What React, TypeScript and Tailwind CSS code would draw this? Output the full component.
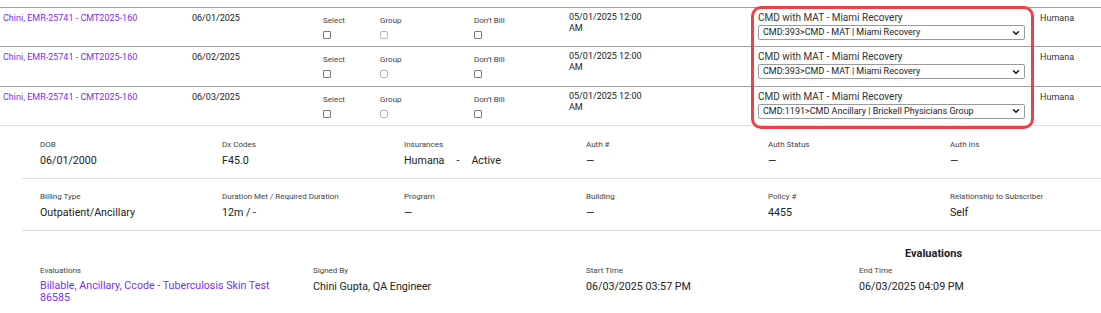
import { ChevronDown } from 'lucide-react'
import type { ReactNode } from 'react'

const rows = [
  { date: '06/01/2025', option: 'CMD:393>CMD - MAT | Miami Recovery' },
  { date: '06/02/2025', option: 'CMD:393>CMD - MAT | Miami Recovery' },
  { date: '06/03/2025', option: 'CMD:1191>CMD Ancillary | Brickell Physicians Group' },
]

const insurance = (
  <>
    Humana<span className="mx-[12px]">-</span>Active
  </>
)

const details: { label: string; value: ReactNode }[][] = [
  [
    { label: 'DOB', value: '06/01/2000' },
    { label: 'Dx Codes', value: 'F45.0' },
    { label: 'Insurances', value: insurance },
    { label: 'Auth #', value: '—' },
    { label: 'Auth Status', value: '—' },
    { label: 'Auth Ins', value: '—' },
  ],
  [
    { label: 'Billing Type', value: 'Outpatient/Ancillary' },
    { label: 'Duration Met / Required Duration', value: '12m / -' },
    { label: 'Program', value: '—' },
    { label: 'Building', value: '—' },
    { label: 'Policy #', value: '4455' },
    { label: 'Relationship to Subscriber', value: 'Self' },
  ],
]

function Box({ soft }: { soft?: boolean }) {
  return (
    <span
      className={
        soft
          ? 'block h-[8px] w-[8px] rounded-[2px] border border-[#b5b5b5]'
          : 'block h-[8px] w-[8px] rounded-[1px] border border-[#7a7a7a]'
      }
    />
  )
}

function CheckCell({ label, soft }: { label: string; soft?: boolean }) {
  return (
    <div className="flex flex-col gap-[5px] pt-[8px]">
      <span className="text-[8px] leading-[10px] text-[#444]">{label}</span>
      <Box soft={soft} />
    </div>
  )
}

function Field({ label, value }: { label: string; value: ReactNode }) {
  return (
    <div className="flex flex-col">
      <span className="text-[8px] leading-[10px] text-[#444]">{label}</span>
      <span className="mt-[4px] whitespace-pre text-[10.7px] leading-[13px] text-[#222]">{value}</span>
    </div>
  )
}

export default function App() {
  return (
    <div className="relative h-[313px] w-[1101px] overflow-hidden bg-white font-['Roboto',sans-serif]">
      <div className="mt-[7px] border-t border-[#a0a0a0]">
        {rows.map((r, i) => (
          <div
            key={r.date}
            className={`flex h-[39.4px] border-b ${i === rows.length - 1 ? 'border-[#dedede]' : 'border-[#a0a0a0]'}`}
          >
            <div className="w-[192px] pl-[3px] pt-[4px] text-[9px] leading-[12px] text-[#7b2ff0]">
              Chini, EMR-25741 - CMT2025-160
            </div>
            <div className="w-[131px] pt-[4px] text-[9px] leading-[12px] text-[#222]">{r.date}</div>
            <div className="w-[57px]">
              <CheckCell label="Select" />
            </div>
            <div className="w-[94px]">
              <CheckCell label="Group" soft />
            </div>
            <div className="w-[95px]">
              <CheckCell label="Don't Bill" />
            </div>
            <div className="w-[189px] pt-[4px] text-[9px] leading-[11px] text-[#222]">
              05/01/2025 12:00
              <br />
              AM
            </div>
            <div className="w-[282px] pt-[4px]">
              <div className="text-[10px] leading-[12px] text-[#333]">CMD with MAT - Miami Recovery</div>
              <div className="mt-[1px] flex h-[15px] w-[267px] items-center justify-between rounded-[2px] border border-[#9a9a9a] pl-[4px] pr-[3px] text-[9px] text-[#222]">
                <span>{r.option}</span>
                <ChevronDown className="h-[10px] w-[10px] text-[#111]" strokeWidth={3.5} />
              </div>
            </div>
            <div className="pt-[4px] text-[9px] leading-[12px] text-[#333]">Humana</div>
          </div>
        ))}
      </div>

      <div className="pointer-events-none absolute left-[751px] top-[6px] h-[123px] w-[283px] rounded-[10px] border-[3px] border-[#ef3f47]" />

      <div className="ml-[22px]">
        {details.map((row, i) => (
          <div
            key={i}
            className={`grid grid-cols-[repeat(6,182px)] border-b border-[#dcdcdc] pb-[11px] pl-[18px] ${i === 0 ? 'pt-[14px]' : 'pt-[13px]'}`}
          >
            {row.map((f) => (
              <Field key={f.label} label={f.label} value={f.value} />
            ))}
          </div>
        ))}
        <div className="pl-[18px]">
          <div className="pl-[865px] pt-[16px] text-[11px] font-bold leading-[13px] text-[#222]">Evaluations</div>
          <div className="mt-[6px] grid grid-cols-[repeat(4,273px)]">
            <div className="flex flex-col">
              <span className="text-[8px] leading-[10px] text-[#444]">Evaluations</span>
              <span className="mt-[4px] w-[245px] text-[10.7px] leading-[12px] text-[#7b2ff0]">
                Billable, Ancillary, Ccode - Tuberculosis Skin Test 86585
              </span>
            </div>
            <Field label="Signed By" value="Chini Gupta, QA Engineer" />
            <Field label="Start Time" value="06/03/2025 03:57 PM" />
            <Field label="End Time" value="06/03/2025 04:09 PM" />
          </div>
        </div>
      </div>
    </div>
  )
}
